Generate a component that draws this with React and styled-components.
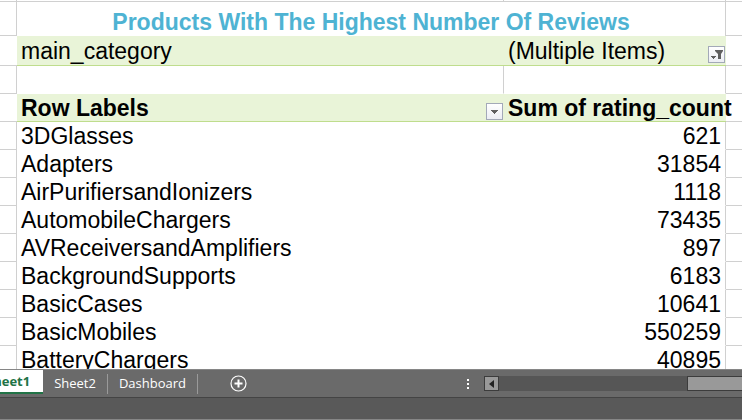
import React from "react";
import styled, { createGlobalStyle, css } from "styled-components";

const GlobalStyle = createGlobalStyle`
  * { box-sizing: border-box; }
  body { margin: 0; background: #fff; }
`;

const Page = styled.div`
  display: flex;
  flex-direction: column;
  height: 100vh;
  overflow: hidden;
  font-family: "Liberation Sans", Arial, sans-serif;
`;

const Sheet = styled.main`
  flex: 1;
  min-height: 0;
  overflow: hidden;
`;

const Grid = styled.table`
  width: 100%;
  table-layout: fixed;
  border-collapse: separate;
  border-spacing: 0;
  font-size: 23px;
  line-height: 25px;
  color: #000;
`;

const Col = styled.col`
  width: ${(p) => p.$width || "auto"};
`;

const Row = styled.tr`
  height: ${(p) => p.$height || 28}px;
`;

const cell = css`
  padding: ${(p) => (p.$slim ? "0" : "2px 4px 0")};
  border-bottom: 1px solid ${(p) => (p.$tinted ? "#bfdd8d" : p.$ruled ? "#d0d0d0" : "#fff")};
  border-right: ${(p) => (p.$edge ? "1px solid #d0d0d0" : "0")};
  background: ${(p) => (p.$tinted ? "#e9f4d8" : "transparent")};
  text-align: ${(p) => p.$align || "left"};
  vertical-align: middle;
  white-space: nowrap;
`;

const Cell = styled.td`${cell}`;
const HeadCell = styled.th`${cell}`;

const TitleCell = styled.th`
  ${cell}
  border-bottom: 0;
  padding-top: 6px;
  color: #4eb3d3;
`;

const CellLine = styled.div`
  display: flex;
  align-items: flex-end;
  justify-content: space-between;
`;

const FilterButton = styled.button`
  display: grid;
  place-items: center;
  flex: none;
  width: 17px;
  height: 17px;
  margin: 0 -3px 1px 0;
  padding: 0;
  border: 1px solid #a3a9b8;
  background: linear-gradient(#fff, #eceef4);
`;

const TabBar = styled.nav`
  display: flex;
  align-items: center;
  flex: none;
  height: 29px;
  border-top: 1px solid #868686;
  border-bottom: 1px solid #444;
  background: #6a6a6a;
`;

const Tab = styled.button`
  flex: none;
  align-self: flex-start;
  height: ${(p) => (p.$active ? 24 : 23)}px;
  margin-left: ${(p) => (p.$active ? -27 : 0)}px;
  padding: ${(p) => (p.$active ? "0 13px" : "2px 11px 0")};
  border: 0;
  border-bottom: ${(p) => (p.$active ? "2px solid #217346" : "0")};
  background: ${(p) => (p.$active ? "#fff" : "transparent")};
  color: ${(p) => (p.$active ? "#217346" : "#fff")};
  font: ${(p) => (p.$active ? 700 : 400)} 13px/22px "Open Sans", "Noto Sans", sans-serif;
`;

const Divider = styled.span`
  width: 1px;
  height: 20px;
  background: #9a9a9a;
`;

const AddButton = styled.button`
  display: flex;
  margin-left: 32px;
  padding: 0;
  border: 0;
  background: none;
`;

const Grip = styled.svg`
  margin-left: auto;
  flex: none;
`;

const ScrollBar = styled.div`
  display: flex;
  width: 258px;
  height: 15px;
  margin-left: 15px;
  background: #565656;
`;

const ScrollArrow = styled.button`
  display: grid;
  place-items: center;
  width: 15px;
  height: 15px;
  padding: 0;
  border: 1px solid #3c3c3c;
  background: #999;
`;

const ScrollThumb = styled.div`
  width: 55px;
  margin-left: auto;
  border: 1px solid #3c3c3c;
  border-right: 0;
  background: #999;
`;

const StatusBar = styled.footer`
  flex: none;
  height: 22px;
  border-bottom: 1px solid #868686;
  background: #595959;
`;

const rows = [
  ["3DGlasses", 621],
  ["Adapters", 31854],
  ["AirPurifiersandIonizers", 1118],
  ["AutomobileChargers", 73435],
  ["AVReceiversandAmplifiers", 897],
  ["BackgroundSupports", 6183],
  ["BasicCases", 10641],
  ["BasicMobiles", 550259],
  ["BatteryChargers", 40895],
];

const DropIcon = () => (
  <svg width="15" height="15" viewBox="0 0 15 15" aria-hidden="true">
    <path d="M4 6h7v1h-1v1H9v1H8v1H7V9H6V8H5V7H4z" fill="#606060" />
  </svg>
);

const FunnelIcon = () => (
  <svg width="15" height="15" viewBox="0 0 15 15" aria-hidden="true">
    <path d="M6 3h8v1l-2 3v5H9V7L6 4z" fill="#606060" />
    <path d="M2 9h5v1H6v1H5v1H4v-1H3v-1H2z" fill="#606060" />
  </svg>
);

export default function App() {
  return (
    <Page>
      <GlobalStyle />
      <Sheet>
        <Grid>
          <colgroup>
            <Col $width="17px" />
            <Col />
            <Col $width="222px" />
            <Col $width="16px" />
          </colgroup>
          <tbody>
            <Row $height={2}>
              <Cell $slim $ruled $edge />
              <Cell $slim $ruled $edge />
              <Cell $slim $ruled $edge />
              <Cell $slim $ruled />
            </Row>
            <Row $height={34}>
              <Cell $ruled $edge />
              <TitleCell colSpan={2} $edge $align="center">
                Products With The Highest Number Of Reviews
              </TitleCell>
              <Cell $ruled />
            </Row>
            <Row $height={30}>
              <Cell $ruled />
              <Cell $tinted>main_category</Cell>
              <Cell $tinted>
                <CellLine>
                  (Multiple Items)
                  <FilterButton aria-label="Filter main_category"><FunnelIcon /></FilterButton>
                </CellLine>
              </Cell>
              <Cell $ruled />
            </Row>
            <Row>
              <Cell $ruled $edge />
              <Cell $edge />
              <Cell $edge />
              <Cell $ruled />
            </Row>
            <Row>
              <Cell $ruled />
              <HeadCell scope="col" $tinted>
                <CellLine>
                  Row Labels
                  <FilterButton aria-label="Filter row labels"><DropIcon /></FilterButton>
                </CellLine>
              </HeadCell>
              <HeadCell scope="col" $tinted>Sum of rating_count</HeadCell>
              <Cell $ruled />
            </Row>
            {rows.map(([label, count]) => (
              <Row key={label}>
                <Cell $ruled $edge />
                <Cell>{label}</Cell>
                <Cell $edge $align="right">{count}</Cell>
                <Cell $ruled />
              </Row>
            ))}
          </tbody>
        </Grid>
      </Sheet>
      <TabBar aria-label="Sheets">
        <Tab $active aria-current="page">Sheet1</Tab>
        <Tab>Sheet2</Tab>
        <Divider />
        <Tab>Dashboard</Tab>
        <Divider />
        <AddButton aria-label="New sheet">
          <svg width="17" height="17" viewBox="0 0 17 17" fill="none" stroke="#fff" aria-hidden="true">
            <circle cx="8.5" cy="8.5" r="7.5" strokeWidth="1.2" />
            <path d="M8.5 4.5v8M4.5 8.5h8" strokeWidth="2" />
          </svg>
        </AddButton>
        <Grip width="2" height="10" viewBox="0 0 2 10" fill="#fff" aria-hidden="true">
          <path d="M0 0h2v2H0zM0 4h2v2H0zM0 8h2v2H0z" />
        </Grip>
        <ScrollBar>
          <ScrollArrow aria-label="Scroll left">
            <svg width="5" height="8" viewBox="0 0 5 8" aria-hidden="true">
              <path d="M5 0v8L0 4z" fill="#222" />
            </svg>
          </ScrollArrow>
          <ScrollThumb />
        </ScrollBar>
      </TabBar>
      <StatusBar />
    </Page>
  );
}
